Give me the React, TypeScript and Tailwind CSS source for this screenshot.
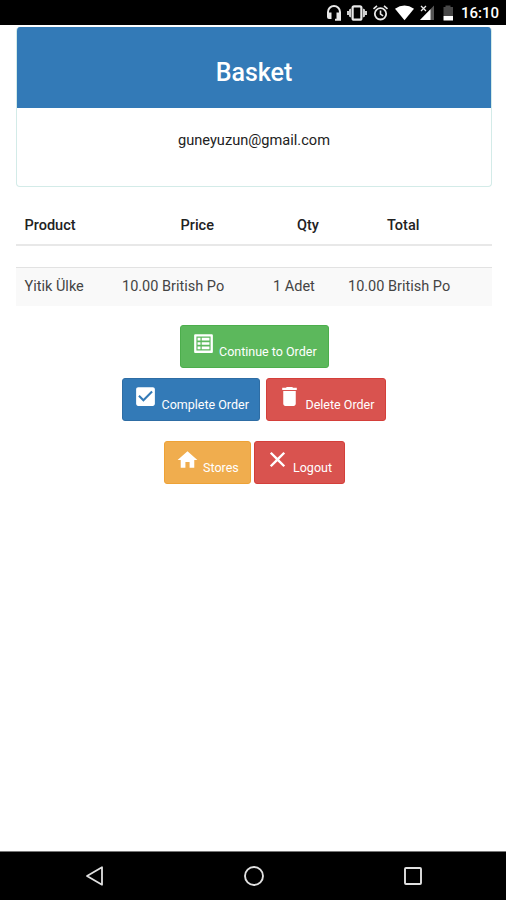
import React from 'react';
import clsx from 'clsx';

interface BasketItem {
  product: string;
  price: string;
  qty: string;
  total: string;
}

const items: BasketItem[] = [
  { product: 'Yitik Ülke', price: '10.00 British Po', qty: '1 Adet', total: '10.00 British Po' },
];

// Filled glyphs, all on a 24x24 grid
const icons = {
  list: 'M4.2 3h15.6c.7 0 1.2.5 1.2 1.2v15.6c0 .7-.5 1.2-1.2 1.2H4.2c-.7 0-1.2-.5-1.2-1.2V4.2c0-.7.5-1.2 1.2-1.2zM5.2 5.2v13.6h13.6V5.2zM10.3 6.5h7.4v2.6h-7.4zM10.3 10.7h7.4v2.6h-7.4zM10.3 14.9h7.4v2.6h-7.4zM6.3 6.5h2.8v2.6H6.3zM6.3 10.7h2.8v2.6H6.3zM6.3 14.9h2.8v2.6H6.3z',
  check: 'M19 3H5c-1.11 0-2 .9-2 2v14c0 1.1.89 2 2 2h14c1.11 0 2-.9 2-2V5c0-1.1-.89-2-2-2zm-9 14l-5-5 1.41-1.41L10 14.17l7.59-7.59L19 8l-9 9z',
  trash: 'M6 19c0 1.1.9 2 2 2h8c1.1 0 2-.9 2-2V6.7H6zM19 3.7h-3.5l-1-.9h-5l-1 .9H5v2h14z',
  home: 'M10 20v-5.5h4V20h4.5v-7.5h3L12 4l-9.5 8.5h3V20z',
  close: 'M19.3 6.3L17.7 4.7 12 10.4 6.3 4.7 4.7 6.3 10.4 12 4.7 17.7 6.3 19.3 12 13.6 17.7 19.3 19.3 17.7 13.6 12z',
};

interface ActionButtonProps {
  icon: keyof typeof icons;
  label: string;
  className: string;
}

const ActionButton: React.FC<ActionButtonProps> = ({ icon, label, className }) => (
  <button className={clsx('flex h-[43px] items-start rounded-[3px] border pl-2.5 pt-[5px] text-white', className)}>
    <svg viewBox="0 0 24 24" className="h-[25px] w-[25px] shrink-0 fill-current">
      <path d={icons[icon]} fillRule={icon === 'list' ? 'evenodd' : 'nonzero'} />
    </svg>
    <span className="ml-[3.5px] mt-3 whitespace-nowrap text-[12.5px] leading-[18px]">{label}</span>
  </button>
);

const StatusIcons = () => (
  <svg viewBox="322 0 136 25" className="ml-[322px] h-[25px] w-[136px] shrink-0" fill="none" stroke="#e8e8e8">
    {/* headset */}
    <path d="M328 14.5V12a6 6 0 0 1 12 0v7.8H335" strokeWidth="2" />
    <path d="M327 12.5h4.5v6.5h-2.5q-2 0-2-2zM336.5 12.5h4.5v6.5h-4.5z" fill="#e8e8e8" stroke="none" />
    {/* vibrate */}
    <rect x="352.6" y="6.3" width="8.8" height="13.4" rx="1.5" strokeWidth="2.2" />
    <path d="M351 8.5v9l-2-1v-1.5h-2v-4h2V9.5zM363 8.5v9l2-1v-1.5h2v-4h-2V9.5z" fill="#d0d0d0" stroke="none" />
    {/* alarm */}
    <circle cx="380.5" cy="13.8" r="5.7" strokeWidth="1.8" />
    <path d="M380.5 10.5v3.6l2.6 1.7M373.5 8.8l3.5-3M387.5 8.8l-3.5-3" strokeWidth="1.6" />
    {/* wifi */}
    <path d="M395 8.8Q404.5 2.4 414 8.8L404.5 20.3z" fill="#fff" stroke="none" />
    {/* cell signal */}
    <path d="M434 5.5V20h-14z" fill="#555" stroke="none" />
    <path d="M430.5 9.2V20h-10.5z" fill="#fff" stroke="none" />
    <path d="M421 6l5 5M426 6l-5 5" strokeWidth="1.3" />
    {/* battery */}
    <path d="M443.5 7h2V5.6h5V7h2.5v9h-9.5z" fill="#484848" stroke="none" />
    <path d="M443.5 16h9.5v4.5h-9.5z" fill="#fff" stroke="none" />
  </svg>
);

const StatusBar = () => (
  <div className="flex h-[25px] shrink-0 items-center bg-black text-white">
    <StatusIcons />
    <span className="ml-[3px] whitespace-nowrap pt-[2px] text-[15px] font-medium leading-[23px]">16:10</span>
  </div>
);

const NavBar = () => (
  <div className="flex h-[49px] shrink-0 items-center justify-between border-t border-[#777] bg-black pl-[84px] pr-[82px]">
    <svg viewBox="0 0 22 22" className="h-[22px] w-[22px]" fill="none" stroke="#e0e0e0" strokeWidth="1.8">
      <path d="M18 2.3v17.4L3 11z" strokeLinejoin="round" />
    </svg>
    <svg viewBox="0 0 22 22" className="h-[22px] w-[22px]" fill="none" stroke="#e0e0e0" strokeWidth="1.9">
      <circle cx="11" cy="11" r="9" />
    </svg>
    <svg viewBox="0 0 22 22" className="h-[22px] w-[22px]" fill="none" stroke="#e0e0e0" strokeWidth="1.9">
      <rect x="3" y="3" width="16" height="16" rx="1" />
    </svg>
  </div>
);

export default function App() {
  return (
    <div className="flex h-[900px] w-[506px] flex-col overflow-hidden bg-white font-['Roboto',sans-serif] text-[#222]">
      <StatusBar />

      <main className="flex-1 pl-4 pr-3.5 pt-[2px]">
        <section className="h-[160px] overflow-hidden rounded border border-t-0 border-[#d3ebe8]">
          <h1 className="flex h-[81px] items-center justify-center bg-[#337ab7] pt-[10px] text-[25px] font-medium text-white">
            Basket
          </h1>
          <p className="pt-[22px] text-center text-[14.6px] leading-5">guneyuzun@gmail.com</p>
        </section>

        <table className="mt-[19px] w-full table-fixed border-collapse text-[14.5px]">
          <colgroup>
            <col className="w-[97px]" />
            <col className="w-[152px]" />
            <col className="w-[75px]" />
            <col />
          </colgroup>
          <thead>
            <tr className="h-[39px] border-b-2 border-[#e8e8e8]">
              <th className="pl-[8.5px] pt-0.5 text-left font-medium">Product</th>
              <th className="pl-[67.5px] pt-0.5 text-left font-medium">Price</th>
              <th className="pl-8 pt-0.5 text-left font-medium">Qty</th>
              <th className="pl-[47px] pt-0.5 text-left font-medium">Total</th>
            </tr>
          </thead>
          <tbody>
            <tr className="h-[22px] border-b border-[#e2e2e2]">
              <td colSpan={4} />
            </tr>
            {items.map((item) => (
              <tr key={item.product} className="h-[39px] whitespace-nowrap bg-[#f9f9f9] text-[#444]">
                <td className="pl-[8.5px]">{item.product}</td>
                <td className="pl-[9px]">{item.price}</td>
                <td className="pl-2">{item.qty}</td>
                <td className="pl-2">{item.total}</td>
              </tr>
            ))}
          </tbody>
        </table>

        <div className="mt-[19px] flex flex-col items-center">
          <ActionButton icon="list" label="Continue to Order" className="w-[149px] border-[#4cae4c] bg-[#5cb85c]" />
          <div className="mt-2.5 flex gap-1.5">
            <ActionButton icon="check" label="Complete Order" className="w-[138px] border-[#2e6da4] bg-[#337ab7]" />
            <ActionButton icon="trash" label="Delete Order" className="w-[120px] border-[#d43f3a] bg-[#d9534f]" />
          </div>
          <div className="mt-5 flex gap-[3px]">
            <ActionButton icon="home" label="Stores" className="w-[87px] border-[#eea236] bg-[#f0ad4e]" />
            <ActionButton icon="close" label="Logout" className="w-[91px] border-[#d43f3a] bg-[#d9534f]" />
          </div>
        </div>
      </main>

      <NavBar />
    </div>
  );
}
